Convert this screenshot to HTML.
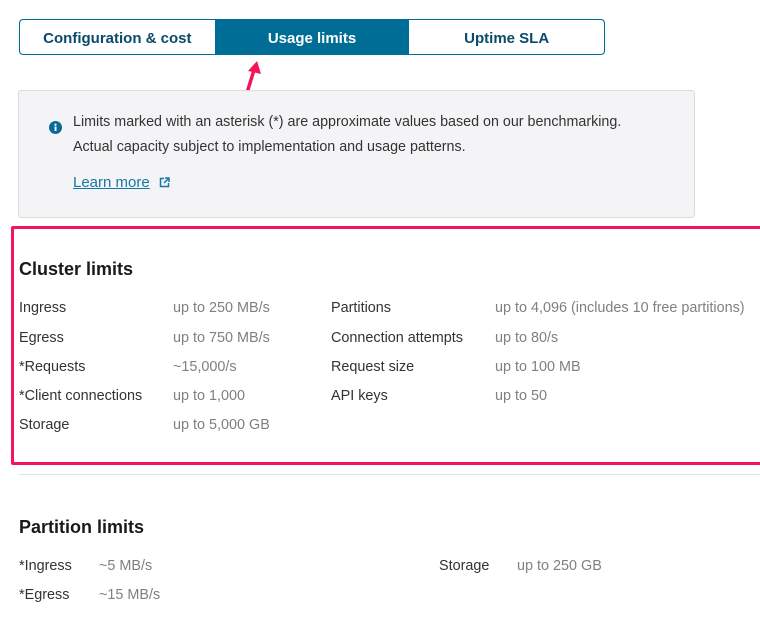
<!DOCTYPE html>
<html><head><style>
*{margin:0;padding:0;box-sizing:border-box}
body{width:760px;height:636px;background:#fff;font-family:"Liberation Sans",sans-serif;color:#222;position:relative;overflow:hidden}
.a{position:absolute;white-space:nowrap;font-size:14.4px;line-height:18px}
.l{color:#333}.v{color:#808080}
.tabs{position:absolute;left:19px;top:19px;width:586px;height:36px;border:1px solid #006d96;border-radius:4px;display:flex;overflow:hidden}
.tabs div{flex:1;text-align:center;line-height:37px;font-weight:bold;font-size:15px;color:#0b4a6a}
.tabs .on{background:#006d96;color:#fff}
.info{position:absolute;left:18px;top:90px;width:677px;height:128px;background:#f4f4f6;border:1px solid #dcdcdf;border-radius:3px}
.red{position:absolute;left:11px;top:226px;width:760px;height:239px;border:3px solid #f5145a;border-radius:2px}
h2{position:absolute;font-size:18px;font-weight:bold;color:#1a1a1a;white-space:nowrap}
</style></head><body>
<div class="tabs"><div>Configuration &amp; cost</div><div class="on">Usage limits</div><div>Uptime SLA</div></div>
<svg style="position:absolute;left:238px;top:56px" width="28" height="42"><path d="M8 40 L16 14" stroke="#f5145a" stroke-width="3.5"/><path d="M10 15 L19 5 L23 18 Z" fill="#f5145a"/></svg>
<div class="info"></div>
<svg style="position:absolute;left:49px;top:121px" width="13" height="13"><circle cx="6.5" cy="6.5" r="6.5" fill="#0a6a96"/><rect x="5.6" y="5.5" width="1.9" height="4.5" fill="#fff"/><circle cx="6.5" cy="3.7" r="1.1" fill="#fff"/></svg>
<div class="a l" style="left:73px;top:113px;font-size:14.3px">Limits marked with an asterisk (*) are approximate values based on our benchmarking.</div>
<div class="a l" style="left:73px;top:138px;font-size:14.3px">Actual capacity subject to implementation and usage patterns.</div>
<div class="a" style="left:73px;top:174px;color:#1478a6;text-decoration:underline;font-size:15px">Learn more</div>
<svg style="position:absolute;left:159px;top:177px" width="11" height="11"><path d="M5 1.5H1.5V9.5H9.5V6" fill="none" stroke="#1478a6" stroke-width="1.5"/><path d="M6 1H10V5M10 1L5 6" fill="none" stroke="#1478a6" stroke-width="1.5"/></svg>
<div class="red"></div>
<h2 style="left:19px;top:259px">Cluster limits</h2>
<div class="a l" style="left:19px;top:299px">Ingress</div><div class="a v" style="left:173px;top:299px">up to 250 MB/s</div>
<div class="a l" style="left:19px;top:329px">Egress</div><div class="a v" style="left:173px;top:329px">up to 750 MB/s</div>
<div class="a l" style="left:19px;top:358px">*Requests</div><div class="a v" style="left:173px;top:358px">~15,000/s</div>
<div class="a l" style="left:19px;top:387px">*Client connections</div><div class="a v" style="left:173px;top:387px">up to 1,000</div>
<div class="a l" style="left:19px;top:416px">Storage</div><div class="a v" style="left:173px;top:416px">up to 5,000 GB</div>
<div class="a l" style="left:331px;top:299px">Partitions</div><div class="a v" style="left:495px;top:299px">up to 4,096 (includes 10 free partitions)</div>
<div class="a l" style="left:331px;top:329px">Connection attempts</div><div class="a v" style="left:495px;top:329px">up to 80/s</div>
<div class="a l" style="left:331px;top:358px">Request size</div><div class="a v" style="left:495px;top:358px">up to 100 MB</div>
<div class="a l" style="left:331px;top:387px">API keys</div><div class="a v" style="left:495px;top:387px">up to 50</div>
<div style="position:absolute;left:19px;top:474px;width:741px;height:1px;background:#e2e2e6"></div>
<h2 style="left:19px;top:517px">Partition limits</h2>
<div class="a l" style="left:19px;top:557px">*Ingress</div><div class="a v" style="left:99px;top:557px">~5 MB/s</div>
<div class="a l" style="left:19px;top:586px">*Egress</div><div class="a v" style="left:99px;top:586px">~15 MB/s</div>
<div class="a l" style="left:439px;top:557px">Storage</div><div class="a v" style="left:517px;top:557px">up to 250 GB</div>
</body></html>
